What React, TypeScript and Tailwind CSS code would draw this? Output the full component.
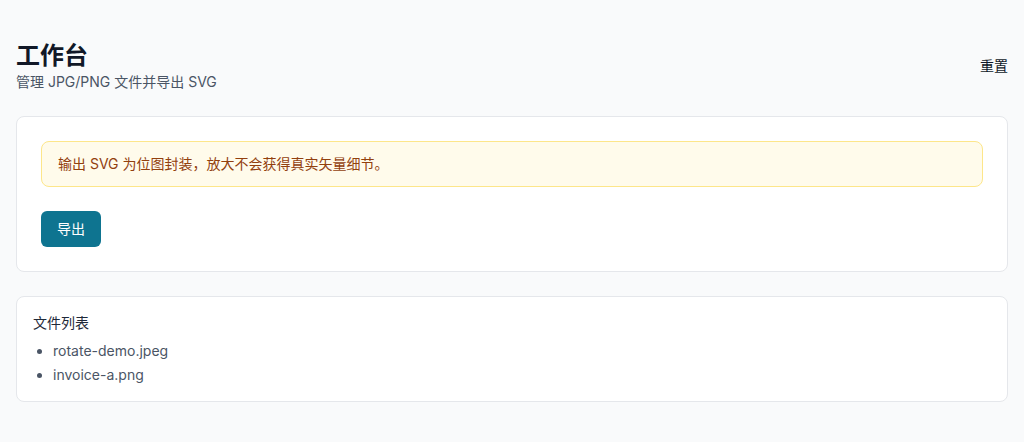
import React from "react";

export default function App() {
  return (
    <div
      className="min-h-screen bg-[#f9fafb] px-4 pt-10 pb-10 text-gray-900"
      style={{ fontFamily: 'Inter, "Noto Sans CJK SC", sans-serif' }}
    >
      <div className="flex flex-col gap-6">
        <header className="flex items-center justify-between">
          <div>
            <h1 className="text-2xl font-bold leading-8 text-[#111827]">工作台</h1>
            <p className="text-sm leading-5 text-gray-600">管理 JPG/PNG 文件并导出 SVG</p>
          </div>
          <button className="text-sm leading-5 text-gray-900">重置</button>
        </header>

        <section className="rounded-lg border border-gray-200 bg-white p-6">
          <div className="rounded-lg border border-[#fde68a] bg-[#fffbeb] px-4 py-3 text-sm leading-5 text-[#92400e]">
            输出 SVG 为位图封装，放大不会获得真实矢量细节。
          </div>
          <button className="mt-6 rounded-md bg-[#0e7490] px-4 py-2 text-sm font-normal leading-5 text-white">
            导出
          </button>
        </section>

        <section className="rounded-lg border border-gray-200 bg-white p-4">
          <h2 className="text-sm font-normal leading-5 text-gray-800">文件列表</h2>
          <ul className="mt-2 list-disc space-y-1 pl-5 text-sm leading-5 text-gray-600">
            <li>rotate-demo.jpeg</li>
            <li>invoice-a.png</li>
          </ul>
        </section>
      </div>
    </div>
  );
}
